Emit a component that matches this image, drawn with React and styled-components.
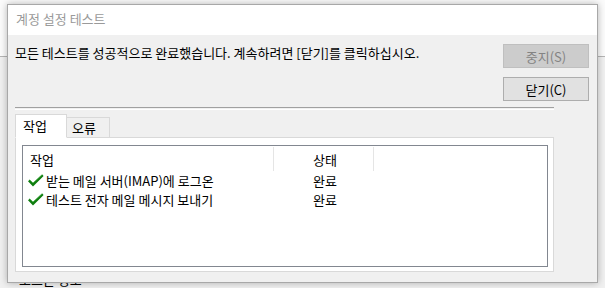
import React from 'react';
import styled, { createGlobalStyle } from 'styled-components';

const GlobalStyle = createGlobalStyle`
  html, body {
    margin: 0;
    padding: 0;
    width: 605px;
    height: 288px;
    overflow: hidden;
    background: #f0f0f0;
    font-family: "Noto Sans CJK KR", "Noto Sans", sans-serif;
    font-size: 13px;
    color: #000;
  }
`;

// background application behind the dialog
const Desktop = styled.div`
  position: relative;
  width: 605px;
  height: 288px;
  display: flex;
  flex-direction: column;
`;

const BackHeader = styled.div`
  height: 60px;
  background: #fbfbfb;
  border-bottom: 1px solid #b4b4b4;
`;

const BackBody = styled.div`
  flex: 1;
  padding: 215px 0 0 19px;
  font-size: 13px;
  line-height: 16px;
`;

// the dialog window
const Window = styled.div`
  position: absolute;
  left: 7px;
  top: 4px;
  width: 589px;
  height: 277px;
  border: 1px solid #a8a8a8;
  background: #f0f0f0;
  box-shadow: 0 0 7px rgba(0, 0, 0, 0.28);
  display: flex;
  flex-direction: column;
`;

const TitleBar = styled.div`
  height: 30px;
  background: #fff;
  display: flex;
  align-items: center;
  padding-left: 8px;
  color: #9a9a9a;
  padding-bottom: 3px;
  box-sizing: border-box;
`;

const Body = styled.div`
  flex: 1;
  display: flex;
  flex-direction: column;
  padding: 9px 8px 0 7px;
`;

const TopRow = styled.div`
  display: flex;
  justify-content: space-between;
`;

const Message = styled.div`
  padding-top: 1px;
  line-height: 16px;
`;

const ButtonColumn = styled.div`
  display: flex;
  flex-direction: column;
  gap: 9px;
`;

const Button = styled.div`
  width: 86px;
  height: 24px;
  box-sizing: border-box;
  display: flex;
  align-items: center;
  justify-content: center;
  border: 1px solid ${({ disabled }) => (disabled ? '#bfbfbf' : '#adadad')};
  background: ${({ disabled }) => (disabled ? '#cccccc' : '#e1e1e1')};
  color: ${({ disabled }) => (disabled ? '#838383' : '#000')};
`;

const Separator = styled.div`
  margin: 6px 35px 0 0;
  height: 1px;
  border-top: 1px solid #a0a0a0;
  border-bottom: 1px solid #fff;
`;

const TabStrip = styled.div`
  display: flex;
  align-items: flex-end;
  margin-top: 4px;
  height: 23px;
  position: relative;
  z-index: 1;
`;

const Tab = styled.div`
  box-sizing: border-box;
  display: flex;
  align-items: center;
  border: 1px solid #d9d9d9;
  border-bottom: ${({ active }) => (active ? '1px solid #fff' : 'none')};
  background: ${({ active }) => (active ? '#fff' : '#f0f0f0')};
  height: ${({ active }) => (active ? '24px' : '20px')};
  margin-bottom: ${({ active }) => (active ? '-1px' : '0')};
  width: ${({ w }) => w}px;
  padding-left: ${({ active }) => (active ? '7px' : '5px')};
  border-left: ${({ first }) => (first ? '1px solid #d9d9d9' : 'none')};
  padding-bottom: ${({ active }) => (active ? '1px' : '0')};
`;

const Panel = styled.div`
  margin-right: 35px;
  height: 135px;
  box-sizing: border-box;
  border: 1px solid #d9d9d9;
  background: #fff;
  padding: 7px 5px 4px 6px;
  display: flex;
`;

const ListView = styled.div`
  flex: 1;
  border: 1px solid #828790;
  background: #fff;
  display: flex;
  flex-direction: column;
`;

const HeaderRow = styled.div`
  display: flex;
  height: 25px;
  align-items: stretch;
`;

const HeaderCell = styled.div`
  width: ${({ w }) => w}px;
  padding-left: ${({ pad }) => pad}px;
  box-sizing: border-box;
  display: flex;
  align-items: center;
  border-right: 1px solid #e5e5e5;
  margin: 1px 0 0;
`;

const Row = styled.div`
  display: flex;
  height: 19px;
  align-items: center;
`;

const Cell = styled.div`
  width: ${({ w }) => w}px;
  padding-left: ${({ pad }) => pad}px;
  box-sizing: border-box;
  display: flex;
  align-items: center;
  white-space: nowrap;
`;

const CheckIcon = () => (
  <svg width="17" height="13" viewBox="0 0 17 13" style={{ marginRight: 2, flexShrink: 0 }}>
    <path d="M1 7.2 L2.6 5.7 L6 9 L15.2 0.6 L16.6 2 L6 12.4 Z" fill="#0f7d0f" />
    <path d="M2.6 5.7 L6 9 L15.2 0.6" fill="none" stroke="#3aa83a" strokeWidth="0.7" />
  </svg>
);

const tasks = [
  { name: '받는 메일 서버(IMAP)에 로그온', status: '완료' },
  { name: '테스트 전자 메일 메시지 보내기', status: '완료' },
];

const App = () => (
  <>
    <GlobalStyle />
    <Desktop>
      <BackHeader />
      <BackBody>로그온 정보</BackBody>
      <Window>
        <TitleBar>계정 설정 테스트</TitleBar>
        <Body>
          <TopRow>
            <Message>모든 테스트를 성공적으로 완료했습니다. 계속하려면 [닫기]를 클릭하십시오.</Message>
            <ButtonColumn>
              <Button disabled>중지(S)</Button>
              <Button>닫기(C)</Button>
            </ButtonColumn>
          </TopRow>
          <Separator />
          <TabStrip>
            <Tab active first w={52}>작업</Tab>
            <Tab w={43}>오류</Tab>
          </TabStrip>
          <Panel>
            <ListView>
              <HeaderRow>
                <HeaderCell w={251} pad={7}>작업</HeaderCell>
                <HeaderCell w={100} pad={39}>상태</HeaderCell>
              </HeaderRow>
              {tasks.map((t, i) => (
                <Row key={i}>
                  <Cell w={252} pad={4}>
                    <CheckIcon />
                    {t.name}
                  </Cell>
                  <Cell w={100} pad={38}>{t.status}</Cell>
                </Row>
              ))}
            </ListView>
          </Panel>
        </Body>
      </Window>
    </Desktop>
  </>
);

export default App;
